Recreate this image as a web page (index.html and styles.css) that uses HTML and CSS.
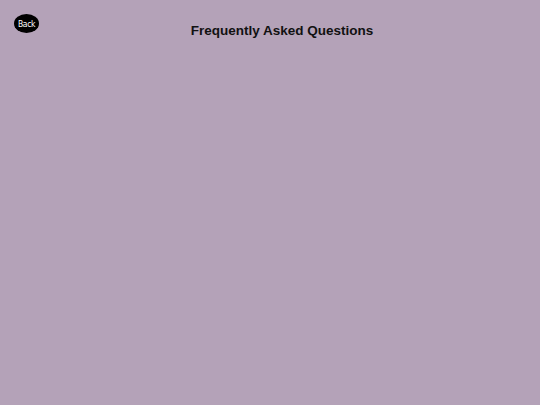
FILE: index.html
```html
<!DOCTYPE html>
<html>
<head>
<meta charset="utf-8">
<link rel="stylesheet" href="styles.css">
</head>
<body>
<header class="header">
  <button class="back">Back</button>
  <h1 class="title">Frequently Asked Questions</h1>
</header>
</body>
</html>
```
FILE: styles.css
```css
html, body {
  margin: 0;
  padding: 0;
  width: 540px;
  height: 405px;
  background: #b4a2b8;
  overflow: hidden;
}
.header {
  display: flex;
  align-items: flex-start;
  padding: 14px 15px 0 14px;
}
.back {
  width: 25px;
  height: 19px;
  border: none;
  border-radius: 50%;
  background: #000;
  color: #fff;
  font-family: "DejaVu Sans Condensed", "DejaVu Sans", sans-serif;
  font-size: 8.5px;
  padding: 1px 0 0 0;
  line-height: 18px;
  letter-spacing: -0.4px;
}
.title {
  flex: 1;
  margin: 9px 0 0 0;
  text-align: center;
  font-family: "Liberation Sans", Arial, sans-serif;
  font-weight: bold;
  font-size: 13.5px;
  color: #111;
  line-height: 16px;
}
```
